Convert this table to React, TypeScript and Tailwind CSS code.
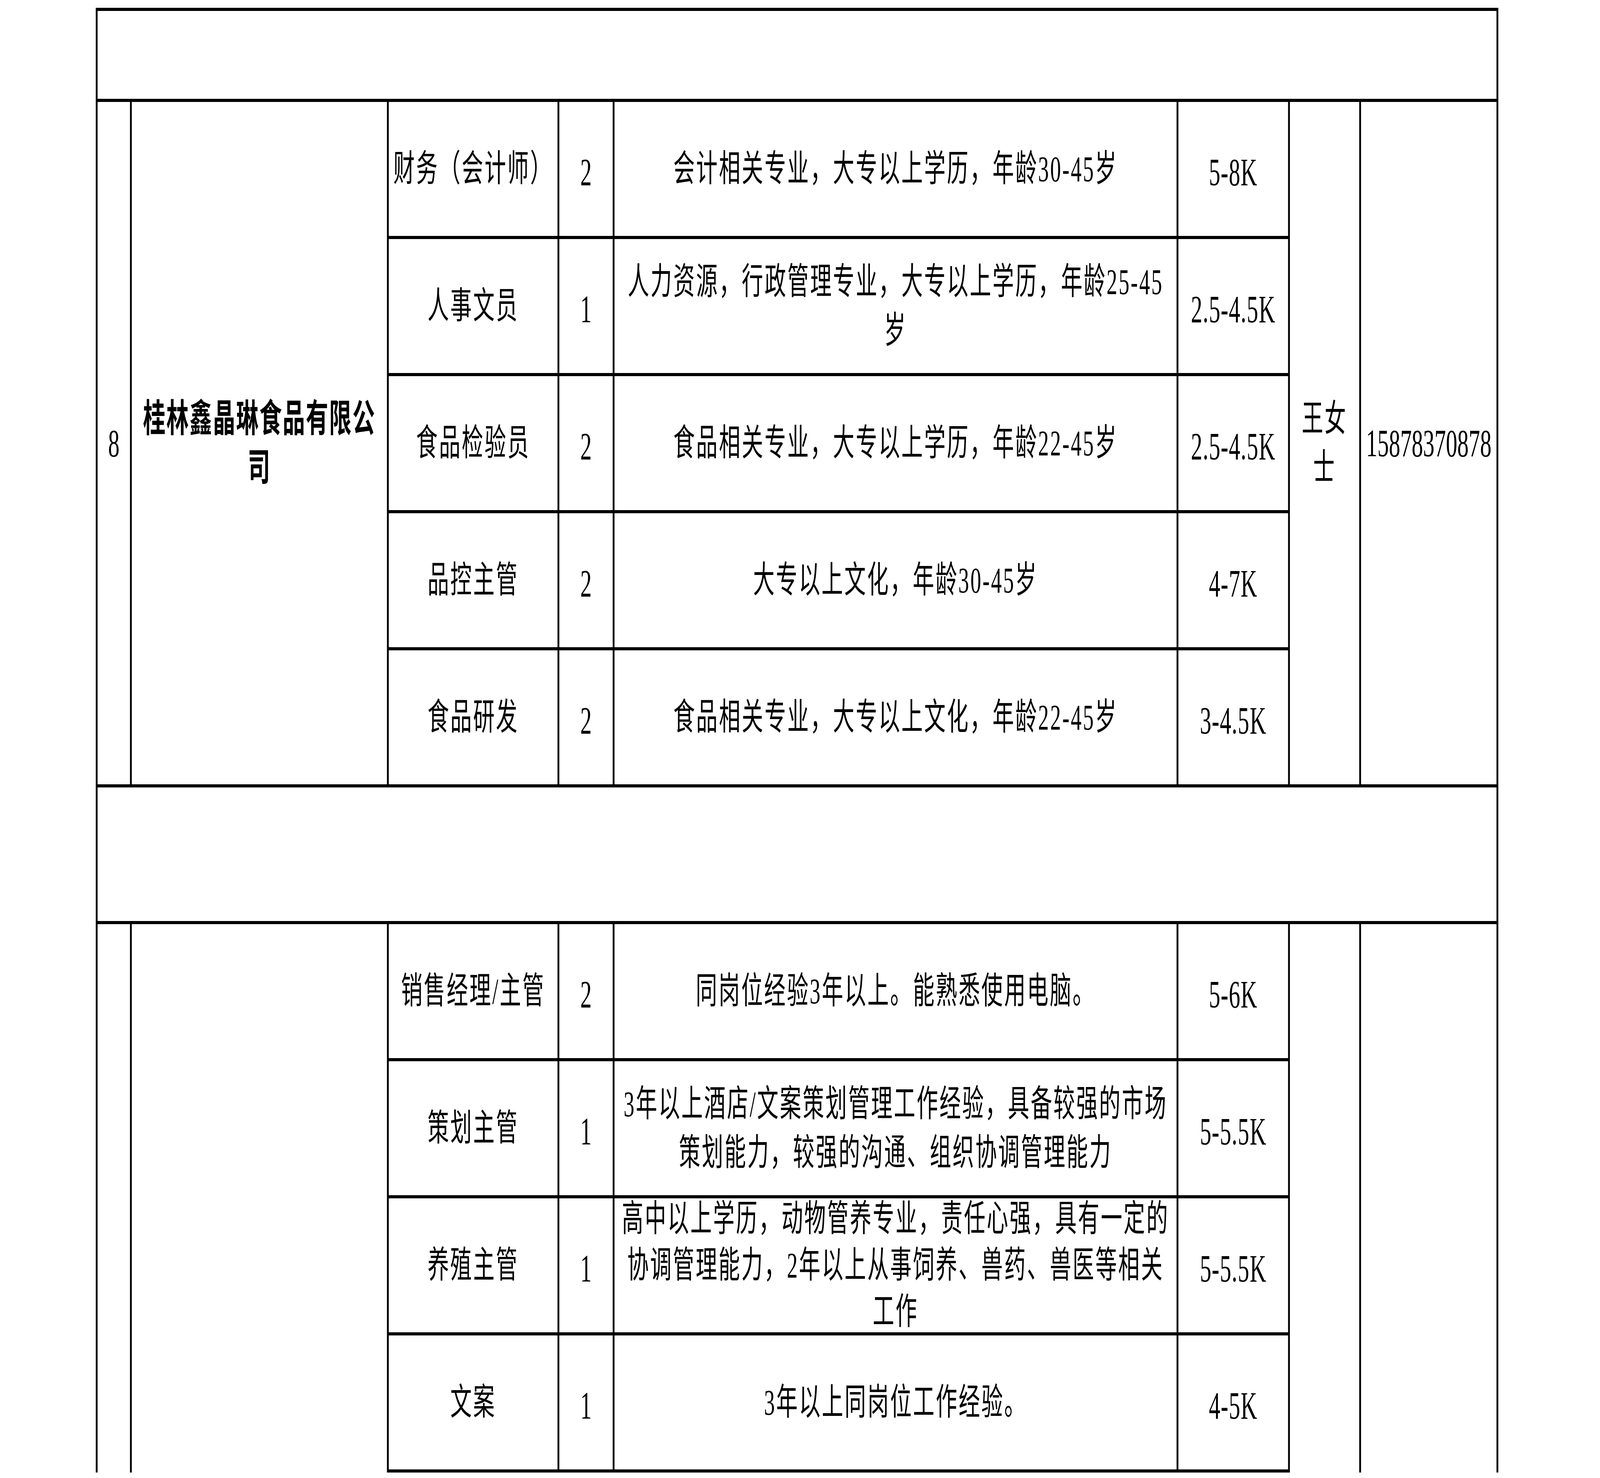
import { useEffect, useState } from "react";

type Job = {
  pos: string;
  n: string;
  desc: string;
  pay: string;
  tight?: boolean;
};

const PAGE_W = 7017;
const PAGE_H = 3784;

const firstJobs: Job[] = [
  { pos: "财务（会计师）", n: "2", desc: "会计相关专业，大专以上学历，年龄30-45岁", pay: "5-8K" },
  { pos: "人事文员", n: "1", desc: "人力资源，行政管理专业，大专以上学历，年龄25-45岁", pay: "2.5-4.5K" },
  { pos: "食品检验员", n: "2", desc: "食品相关专业，大专以上学历，年龄22-45岁", pay: "2.5-4.5K" },
  { pos: "品控主管", n: "2", desc: "大专以上文化，年龄30-45岁", pay: "4-7K" },
  { pos: "食品研发", n: "2", desc: "食品相关专业，大专以上文化，年龄22-45岁", pay: "3-4.5K" },
];

const secondJobs: Job[] = [
  { pos: "销售经理/主管", n: "2", desc: "同岗位经验3年以上。能熟悉使用电脑。", pay: "5-6K" },
  {
    pos: "策划主管",
    n: "1",
    desc: "3年以上酒店/文案策划管理工作经验，具备较强的市场策划能力，较强的沟通、组织协调管理能力",
    pay: "5-5.5K",
  },
  {
    pos: "养殖主管",
    n: "1",
    desc: "高中以上学历，动物管养专业，责任心强，具有一定的协调管理能力，2年以上从事饲养、兽药、兽医等相关工作",
    pay: "5-5.5K",
    tight: true,
  },
  { pos: "文案", n: "1", desc: "3年以上同岗位工作经验。", pay: "4-5K" },
];

const cell = "bg-white flex items-center justify-center text-center";
const cjk = "text-[94px] tracking-[6px] leading-[125px]";
const digits = "text-[100px] leading-[125px]";

function JobCells({ job }: { job: Job }) {
  return (
    <>
      <div className={`${cell} ${cjk} px-[10px]`}>{job.pos}</div>
      <div className={`${cell} ${digits} pt-[16px]`}>{job.n}</div>
      <div
        className={`${cell} text-[94px] tracking-[6px] px-[24px] ${
          job.tight ? "leading-[119px]" : "leading-[125px]"
        }`}
      >
        {job.desc}
      </div>
      <div className={`${cell} ${digits} tracking-[2px] pt-[16px]`}>{job.pay}</div>
    </>
  );
}

// the sheet is laid out at 7017x3784 design px and stretched onto the real viewport
function useFit() {
  const read = () =>
    typeof window === "undefined"
      ? { x: 1, y: 1 }
      : { x: window.innerWidth / PAGE_W, y: window.innerHeight / PAGE_H };
  const [fit, setFit] = useState(read);
  useEffect(() => {
    const onResize = () => setFit(read());
    onResize();
    window.addEventListener("resize", onResize);
    return () => window.removeEventListener("resize", onResize);
  }, []);
  return fit;
}

export default function App() {
  const fit = useFit();

  return (
    <div className="w-screen h-screen overflow-hidden bg-white">
      <div
        className="w-[7017px] h-[3784px] origin-top-left bg-white pt-[20px] pl-[420px] text-black font-['Liberation_Serif','Noto_Sans_CJK_SC',serif] [text-autospace:no-autospace]"
        style={{ transform: `scale(${fit.x}, ${fit.y})` }}
      >
        <div className="grid w-fit grid-cols-[142px_1119px_740px_234px_2465px_481px_304px_594px] grid-rows-[225px_repeat(5,343px)_342px_repeat(4,343px)_0px] gap-[8px] bg-black pt-[8px] px-[8px]">
          {/* blank title row */}
          <div className={`${cell} col-span-8`} />

          {/* company 8 */}
          <div className={`${cell} row-span-5 ${digits}`}>8</div>
          <div className={`${cell} row-span-5 px-[10px] text-[98px] font-bold tracking-[4px] leading-[125px]`}>
            桂林鑫晶琳食品有限公司
          </div>
          <JobCells job={firstJobs[0]} />
          <div className={`${cell} row-span-5 px-[20px] ${cjk} leading-[112px]`}>王女士</div>
          <div className={`${cell} row-span-5 ${digits}`}>15878370878</div>
          {firstJobs.slice(1).map((job) => (
            <JobCells key={job.pos} job={job} />
          ))}

          {/* blank divider row */}
          <div className={`${cell} col-span-8`} />

          {/* next company, cut off at the bottom */}
          <div className={`${cell} row-span-5`} />
          <div className={`${cell} row-span-5`} />
          <JobCells job={secondJobs[0]} />
          <div className={`${cell} row-span-5`} />
          <div className={`${cell} row-span-5`} />
          {secondJobs.slice(1).map((job) => (
            <JobCells key={job.pos} job={job} />
          ))}
        </div>
      </div>
    </div>
  );
}
